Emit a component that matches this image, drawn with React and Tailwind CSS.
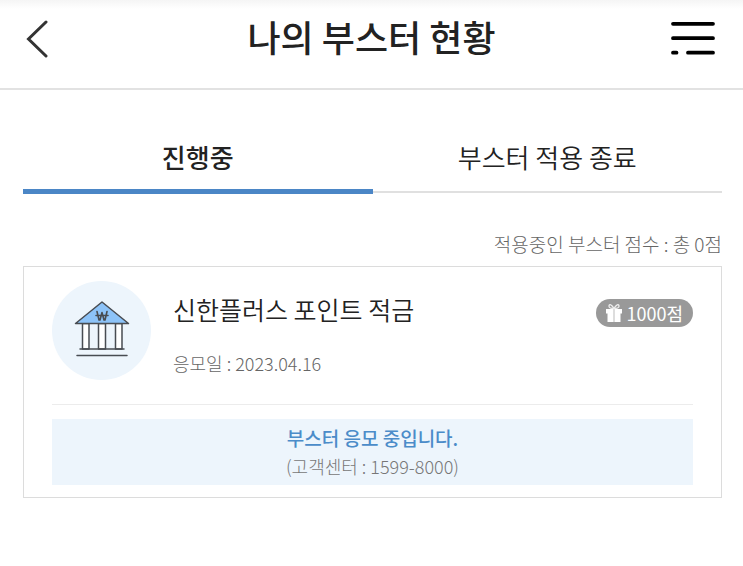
import { useState } from "react";

const BackIcon = () => (
  <svg className="w-6 h-10" viewBox="0 0 24 40" fill="none" stroke="#333" strokeWidth="3" strokeLinecap="round">
    <path d="M22 2 4.500 19 22 36" />
  </svg>
);

const MenuIcon = () => (
  <svg className="w-11 h-9" viewBox="0 0 44 36" fill="none" stroke="#000" strokeWidth="3.800" strokeLinecap="round">
    <path d="M2 3.800h40M2 18.200h40M2 32.700h3.500M17 32.700h25" />
  </svg>
);

const BankIcon = () => (
  <svg className="w-14 h-14" viewBox="0 0 56 56" fill="none" stroke="#484c52" strokeWidth="1.500" strokeLinecap="round" strokeLinejoin="round">
    <path d="M8.500 22.500H15V48H8.500zM24.500 22.500h7V48h-7zM41.500 22.500H48V48h-6.500z" fill="#fff" />
    <path d="M28 1 54.500 22.500h-53Z" fill="#8dc3f8" />
    <path d="M6 48h44M3 54.500h50" />
    <path d="m23 10.500 2 8.500h1L28 11.500l2 7.500h1l2-8.500M22 14.500h12" strokeWidth="1.600" />
  </svg>
);

const GiftIcon = () => (
  <svg className="w-4 h-5" viewBox="0 0 16 20">
    <path d="M0 6h16v4.500H0zM1.500 10.500h13V19h-13z" fill="#fff" />
    <path d="M7 6h2v13H7z" fill="#ddd" />
    <path d="M8 5.500C6 1.500 3 .5 3 3.200c0 1.500 2 2.300 5 2.300ZM8 5.500c2-4 5-5 5-2.300 0 1.500-2 2.300-5 2.300Z" fill="none" stroke="#eee" strokeWidth="1.300" />
  </svg>
);

const tabs = [
  { id: "active", label: "진행중" },
  { id: "ended", label: "부스터 적용 종료" },
];

const Header = () => (
  <header className="flex items-start justify-between h-[90px] pl-6 pr-7 border-b-2 border-[#e2e2e2] bg-linear-to-b from-[#f5f5f5] to-white to-10%">
    <button type="button" aria-label="뒤로" className="w-12 mt-5 cursor-pointer">
      <BackIcon />
    </button>
    <h1 className="mt-4 text-4xl font-medium text-[#222]">나의 부스터 현황</h1>
    <button type="button" aria-label="메뉴" className="mt-5 cursor-pointer">
      <MenuIcon />
    </button>
  </header>
);

const BoosterCard = ({ title, date, points }) => (
  <article className="px-7 pt-3.5 pb-3 border border-[#dcdcdc]">
    <div className="flex gap-[22px] pb-6 border-b border-[#ececec]">
      <div className="flex justify-center items-center shrink-0 w-[99px] h-[99px] pb-1 rounded-full bg-[#edf5fc]">
        <BankIcon />
      </div>
      <div className="flex-1 pt-2.5">
        <h2 className="text-[25px] leading-9 font-[350] text-[#222]">{title}</h2>
        <p className="mt-6 text-[18px] leading-6 font-light text-[#666]">응모일 : {date}</p>
      </div>
      <span className="flex items-center gap-1 self-start mt-[18px] h-7 px-2.5 rounded-full bg-[#999] text-[18px] text-white whitespace-nowrap">
        <GiftIcon />
        {points}점
      </span>
    </div>

    <div className="mt-3.5 py-[5px] bg-[#edf5fc] text-center">
      <p className="text-[19px] leading-7 font-medium text-[#4b8cc9]">부스터 응모 중입니다.</p>
      <p className="text-[18px] leading-7 font-light text-[#777]">(고객센터 : 1599-8000)</p>
    </div>
  </article>
);

const App = () => {
  const [tab, setTab] = useState("active");

  return (
    <div className="min-h-screen bg-white font-['Noto_Sans_CJK_KR',sans-serif]">
      <Header />

      <main className="pl-[23px] pr-[21px] pt-8">
        <div role="tablist" className="grid grid-cols-2">
          {tabs.map(({ id, label }) => (
            <button
              key={id}
              type="button"
              role="tab"
              aria-selected={tab === id}
              onClick={() => setTab(id)}
              className={
                tab === id
                  ? "h-[72px] pt-0.5 border-b-5 border-[#4b86c6] text-[26px] font-medium text-[#222] cursor-pointer"
                  : "h-[71px] border-b-2 border-[#e0e0e0] text-[26px] font-[350] text-[#222] cursor-pointer"
              }
            >
              {label}
            </button>
          ))}
        </div>

        <p className="mt-9 mb-2 text-right text-[19px] leading-7 font-light text-[#666]">
          적용중인 부스터 점수 : 총 0점
        </p>

        {tab === "active" && <BoosterCard title="신한플러스 포인트 적금" date="2023.04.16" points={1000} />}
      </main>
    </div>
  );
};

export default App;
